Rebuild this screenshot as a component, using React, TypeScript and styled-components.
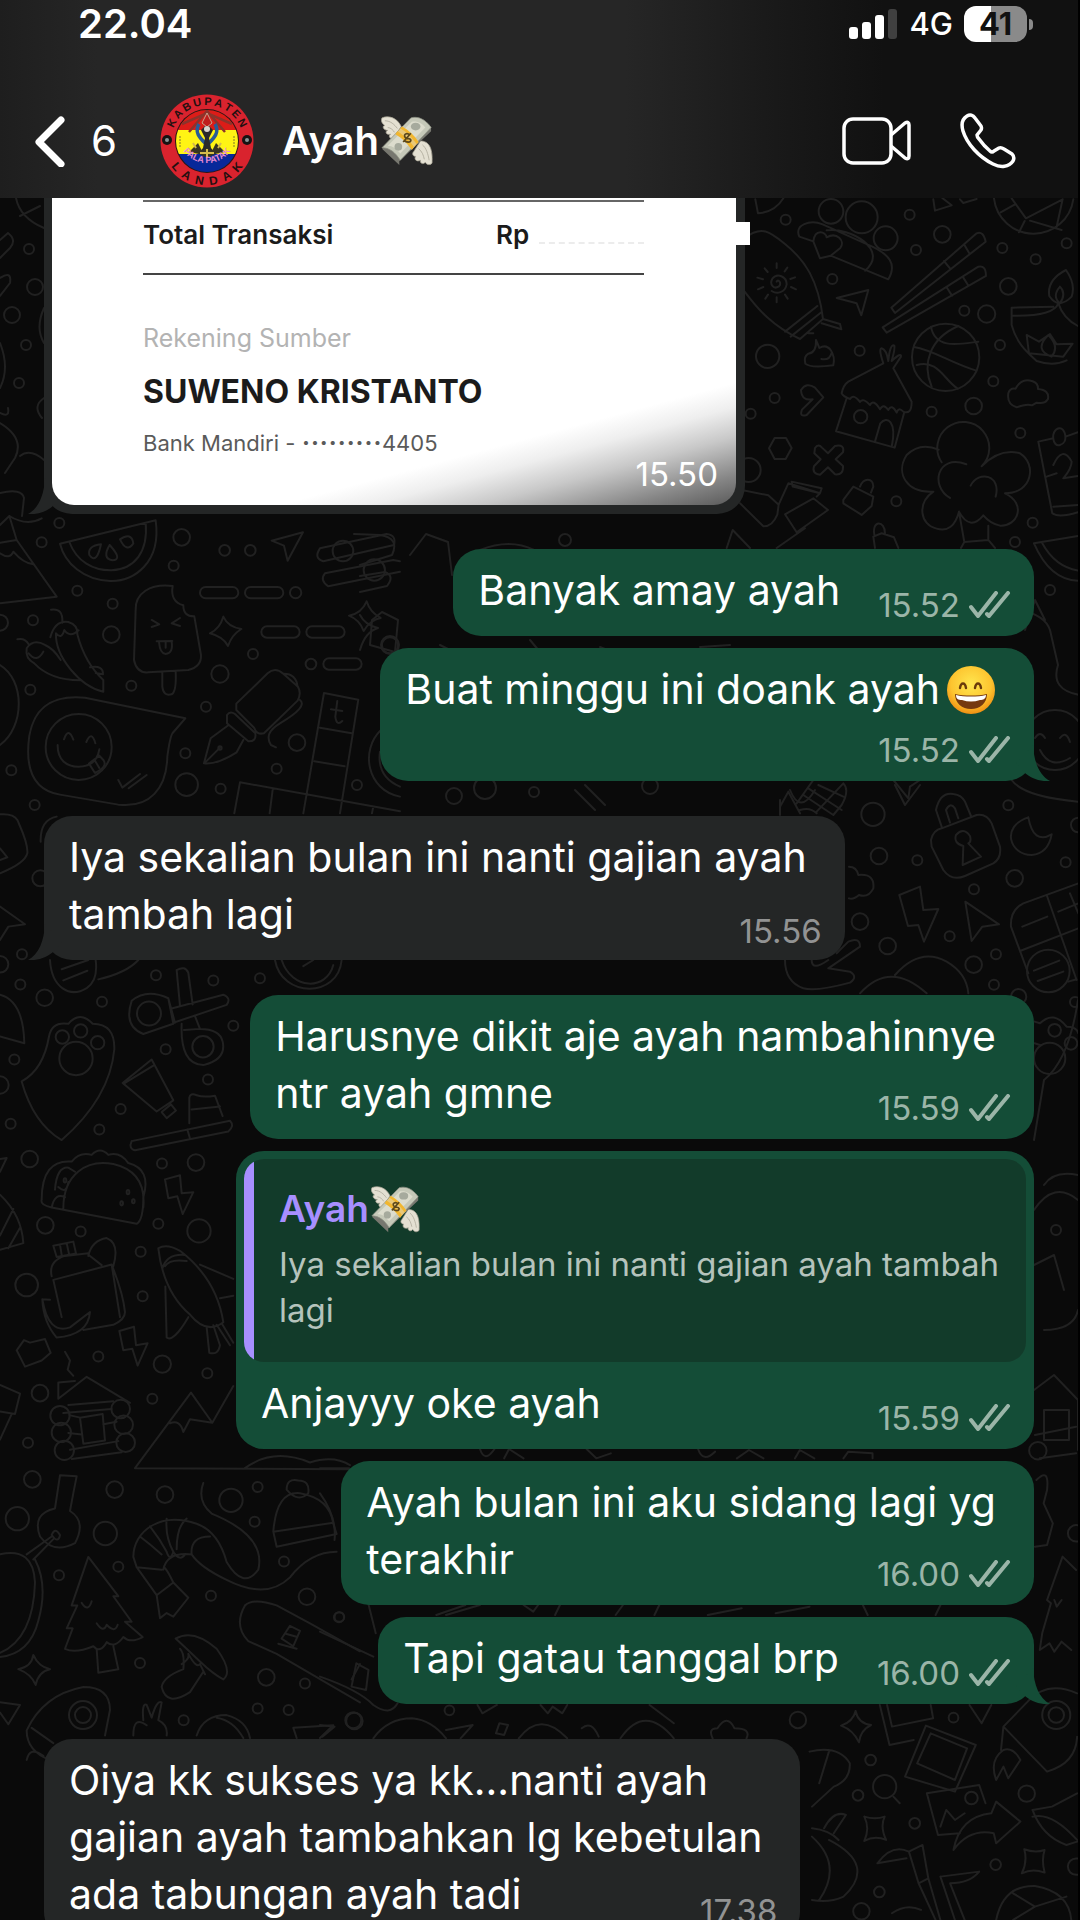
import React from "react";
import styled, { createGlobalStyle } from "styled-components";

const GlobalStyle = createGlobalStyle`
  *, *::before, *::after { box-sizing: border-box; }
  body {
    margin: 0;
    background: #000;
    font-family: Inter, "Liberation Sans", sans-serif;
  }
  p, h1 { margin: 0; }
`;

const Page = styled.div`
  height: 100vh;
  display: flex;
  flex-direction: column;
  overflow: hidden;
  border-right: 2px solid #000;
  background: #0a0a0a;
  color: #fff;
`;

const TopBar = styled.header`
  flex: none;
  height: 198px;
  display: flex;
  flex-direction: column;
  background: linear-gradient(90deg, #1e1e1e 0%, #262626 9%, #262626 58%, #191919 72%, #111 82%, #111 100%);
`;

const StatusBar = styled.div`
  height: 48px;
  display: flex;
  align-items: center;
  justify-content: space-between;
  padding: 0 51px 0 78px;
`;

const Clock = styled.time`
  font-size: 40px;
  line-height: 46px;
  font-weight: 600;
`;

const StatusIcons = styled.div`
  display: flex;
  align-items: center;
  gap: 11px;
`;

const Network = styled.span`
  font-size: 31px;
  line-height: 46px;
  font-weight: 500;
`;

const Battery = styled.span`
  position: relative;
  width: 63px;
  height: 36px;
  border-radius: 12px;
  background: linear-gradient(90deg, #fff 43%, #8a8a8a 43%);
  color: #111;
  font-size: 31px;
  line-height: 36px;
  font-weight: 700;
  text-align: center;
  &::after {
    content: "";
    position: absolute;
    left: 65px;
    top: 13px;
    width: 4px;
    height: 11px;
    border-radius: 0 4px 4px 0;
    background: #8a8a8a;
  }
`;

const NavBar = styled.nav`
  height: 150px;
  display: flex;
  align-items: center;
  padding: 35px 62px 0 34px;
`;

const IconButton = styled.button`
  display: flex;
  align-items: center;
  padding: 0;
  border: 0;
  background: none;
  color: #fff;
  font: inherit;
`;

const BackButton = styled(IconButton)`
  gap: 25px;
  width: 126px;
  font-size: 42px;
  line-height: 50px;
`;

const ContactName = styled.h1`
  flex: 1;
  display: flex;
  align-items: center;
  gap: 2px;
  margin-left: 28px;
  font-size: 40px;
  line-height: 50px;
  font-weight: 600;
`;

const Actions = styled.div`
  display: flex;
  align-items: center;
  gap: 48px;
`;

const Chat = styled.main`
  position: relative;
  flex: 1;
  min-height: 0;
  overflow: hidden;
  display: flex;
  flex-direction: column;
  padding: 0 44px;
`;

const WallpaperSvg = styled.svg`
  position: absolute;
  inset: 0;
  width: 100%;
  height: 100%;
  fill: none;
  stroke: #212121;
  stroke-linejoin: round;
  stroke-linecap: round;
  path, circle, ellipse, rect { vector-effect: non-scaling-stroke; stroke-width: 2px; }
`;

type Side = "in" | "out";

const Bubble = styled.article<{ $side: Side; $first?: boolean }>`
  position: relative;
  flex: none;
  width: fit-content;
  align-self: ${(p) => (p.$side === "out" ? "flex-end" : "flex-start")};
  margin-top: ${(p) => (p.$first ? "35px" : "12px")};
  border-radius: 28px;
  background: ${(p) => (p.$side === "out" ? "#144d37" : "#242626")};
`;

const Body = styled.div`
  padding: 13px 38px 17px 25px;
`;

const Line = styled.p`
  display: flex;
  align-items: center;
  gap: 6px;
  font-size: 41px;
  line-height: 57px;
  white-space: nowrap;
`;

const LastRow = styled.div<{ $metaOnly?: boolean }>`
  display: flex;
  align-items: flex-end;
  justify-content: space-between;
  gap: 38px;
  margin-right: -15px;
  min-height: ${(p) => (p.$metaOnly ? "46px" : "57px")};
`;

const Meta = styled.span<{ $side: Side }>`
  display: flex;
  align-items: center;
  gap: 9px;
  margin-left: auto;
  font-size: 33px;
  line-height: 24px;
  color: ${(p) => (p.$side === "out" ? "#9bb5a8" : "#929393")};
`;

const Tail = styled.svg<{ $side: Side }>`
  position: absolute;
  bottom: 0;
  ${(p) => (p.$side === "out" ? "right: -16px;" : "left: -16px; transform: scaleX(-1);")}
  fill: ${(p) => (p.$side === "out" ? "#144d37" : "#242626")};
`;

const QuoteFrame = styled.div`
  padding: 8px 8px 0;
`;

const Quote = styled.blockquote`
  margin: 0;
  padding: 27px 27px 29px 35px;
  border-radius: 20px;
  background: linear-gradient(90deg, #a78fff 10px, #123b2a 10px);
`;

const QuoteAuthor = styled.p`
  display: flex;
  align-items: center;
  gap: 2px;
  height: 46px;
  margin-bottom: 9px;
  color: #a78fff;
  font-size: 37px;
  line-height: 46px;
  font-weight: 600;
`;

const QuoteText = styled.p`
  color: #b5c3bc;
  font-size: 33px;
  line-height: 46px;
  white-space: nowrap;
`;

const PhotoBubble = styled(Bubble)`
  width: 701px;
  margin-top: 0;
  padding: 0 9px 9px 8px;
  border-radius: 0 0 28px 28px;
`;

const Receipt = styled.div`
  position: relative;
  height: 307px;
  padding: 2px 92px 0 91px;
  border-radius: 0 0 22px 22px;
  background:
    linear-gradient(345deg, #5a5a5a 0%, #868686 6%, #c8c8c8 14%, #eee 20%, rgba(255, 255, 255, 0) 25%),
    #fff;
  color: #1b1b1b;
`;

const ReceiptEdge = styled.span`
  position: absolute;
  left: 684px;
  top: 24px;
  width: 14px;
  height: 23px;
  background: #fff;
`;

const TotalRow = styled.div`
  height: 75px;
  display: flex;
  align-items: center;
  justify-content: space-between;
  padding-bottom: 5px;
  border-top: 2px solid #666;
  border-bottom: 2px solid #444;
  font-size: 26px;
  line-height: 30px;
  font-weight: 600;
`;

const Amount = styled.span`
  display: flex;
  align-items: flex-end;
  gap: 10px;
  width: 148px;
`;

const ErasedDigits = styled.span`
  flex: 1;
  height: 8px;
  border-top: 2px dashed #ececec;
`;

const SourceLabel = styled.p`
  margin-top: 46px;
  color: #b3b3b3;
  font-size: 25px;
  line-height: 34px;
`;

const SourceName = styled.p`
  margin-top: 17px;
  font-size: 32px;
  line-height: 40px;
  font-weight: 700;
`;

const SourceBank = styled.p`
  display: flex;
  align-items: center;
  margin-top: 16px;
  color: #5a5a5a;
  font-size: 22px;
  line-height: 30px;
  white-space: pre;
`;

const MaskDots = styled.span`
  font-size: 31px;
`;

const PhotoTime = styled.time`
  position: absolute;
  right: 18px;
  bottom: 14px;
  color: #fff;
  font-size: 33px;
  line-height: 34px;
`;

const BubbleTail = ({ side }: { side: Side }) => (
  <Tail $side={side} width="34" height="36" viewBox="0 0 34 36" aria-hidden="true">
    <path d="M17 0 C18 17 23 30 34 36 C24 37 14 33 8 27 L0 18 Z" />
  </Tail>
);

const Ticks = () => (
  <svg width="42" height="28" viewBox="0 0 42 28" fill="none" stroke="currentColor" strokeWidth="4" strokeLinecap="round" strokeLinejoin="round" role="img" aria-label="Terkirim">
    <path d="M2 16 L9 25 L27 2" />
    <path d="M18 23 L20 25 L39 2" />
  </svg>
);

const MoneyWings = ({ size }: { size: number }) => (
  <svg width={size} height={size} viewBox="0 0 54 54" role="img" aria-label="uang bersayap">
    <g fill="#e4e0d2" stroke="#a9a595" strokeWidth="0.8">
      <path d="M1 3 C8 0 17 3 21 12 L12 25 C8 24 8 21 10 20 C5 21 4 17 7 16 C2 16 1 11 4 11 C0 8 0 5 1 3 Z" />
      <path d="M41 27 C49 27 54 33 53 50 C50 53 47 51 46 49 C44 52 40 50 41 47 C37 49 34 46 36 43 C33 43 32 40 34 38 Z" />
      <path d="M4 6 C10 6 14 10 17 14 M7 13 C10 13 13 16 14 18 M43 31 C47 34 49 41 50 47 M39 35 C43 38 44 42 45 46" fill="none" />
    </g>
    <path d="M1 35 L19 52 L19 48 L52 17 L52 13 L50 10 Z" fill="#77776f" />
    <path d="M1 34 L31 3 C38 1 46 4 52 13 L20 47 C15 39 9 34 1 34 Z" fill="#c5c8b8" stroke="#8d9084" strokeWidth="0.8" />
    <path d="M7 32 L32 7 C38 6 43 9 46 13 L20 40 C16 35 12 32 7 32 Z" fill="#dcdccd" />
    <ellipse cx="36" cy="12" rx="5" ry="4" fill="#a6aa9d" />
    <ellipse cx="18" cy="33" rx="4" ry="4" fill="#a6aa9d" />
    <path d="M15 20 L22 12 C29 16 35 22 39 28 L32 36 C27 29 22 24 15 20 Z" fill="#e9c878" />
    <path d="M15 20 L17 17 C25 22 30 27 34 33 L32 36 C27 29 22 24 15 20 Z M20 14 L22 12 C29 16 35 22 39 28 L37 30 C31 22 26 17 20 14 Z" fill="#f1b62f" />
    <path d="M30 21 C27 18 23 20 25 23 C27 26 30 23 31 26 C31 29 26 29 24 26 M31 19 L23 28" fill="none" stroke="#5c481b" strokeWidth="1.8" />
  </svg>
);

const GrinningFace = () => (
  <svg width="50" height="50" viewBox="0 0 50 50" role="img" aria-label="wajah tertawa">
    <defs>
      <radialGradient id="face" cx="50%" cy="38%" r="64%">
        <stop offset="0%" stopColor="#ffe64f" />
        <stop offset="65%" stopColor="#fdc42f" />
        <stop offset="100%" stopColor="#ef8a10" />
      </radialGradient>
    </defs>
    <circle cx="25" cy="25" r="24" fill="url(#face)" />
    <path d="M14 23 C15 17 19 17 20 23 M29 23 C30 17 34 17 35 23" fill="none" stroke="#6a3b0b" strokeWidth="2.4" strokeLinecap="round" />
    <path d="M9 29 C18 31 32 31 41 29 C41 38 34 44 25 44 C16 44 9 38 9 29 Z" fill="#75390f" />
    <path d="M10 30 C18 32 32 32 40 30 C40 34 37 35 34 35 C28 37 22 37 16 35 C12 35 10 34 10 30 Z" fill="#fff" />
  </svg>
);

const Avatar = () => (
  <svg width="94" height="94" viewBox="0 0 94 94" role="img" aria-label="Foto profil Ayah">
    <defs>
      <clipPath id="disc"><circle cx="47" cy="47" r="31" /></clipPath>
      <path id="arcTop" d="M11 47 A36 36 0 0 1 83 47" />
      <path id="arcBottom" d="M3 47 A44 44 0 0 0 91 47" />
      <path id="arcInner" d="M18 40 A29 29 0 0 0 76 40" />
    </defs>
    <circle cx="47" cy="47" r="46.500" fill="#d9232e" />
    <circle cx="47" cy="47" r="32" fill="#2a1714" />
    <g clipPath="url(#disc)">
      <rect width="94" height="36" fill="#dd1c18" />
      <rect y="36" width="94" height="24" fill="#fff414" />
      <rect y="60" width="94" height="34" fill="#07289a" />
      <path d="M22 30 L47 19 L72 30 M29 38 L47 17 L65 38" fill="none" stroke="#8d332b" strokeWidth="2.500" />
    </g>
    <path d="M47 19 L52 29 L47 33 L42 29 Z" fill="#bf1d1d" stroke="#c6a58c" strokeWidth="1" />
    <path d="M39 30 C34 38 40 44 45 49 M55 30 C60 38 54 44 49 49" fill="none" stroke="#285b97" strokeWidth="3.500" />
    <path d="M41 36 L45 32 L49 32 L53 36 L49 44 L51 54 L56 60 H38 L43 54 L45 44 Z" fill="#292b2c" />
    <circle cx="47" cy="35" r="3" fill="#d9d5cf" />
    <path d="M29 58 L38 49 L42 57 L47 54 L52 57 L56 49 L65 58 L55 60 L47 64 L39 60 Z" fill="#383522" />
    <path d="M33 49 L36 54 M61 49 L58 54 M47 55 V64 M40 59 L54 59" stroke="#d4bb4c" strokeWidth="2" />
    <path d="M20 42 V53 M74 42 V53" stroke="#aaa025" strokeWidth="1.500" strokeDasharray="2 1" />
    <g fontFamily="Liberation Sans, sans-serif" fontWeight="700" textAnchor="middle">
      <text fontSize="11" fill="#241010"><textPath href="#arcTop" startOffset="50%">{"K\u2009A\u2009B\u2009U\u2009P\u2009A\u2009T\u2009E\u2009N"}</textPath></text>
      <text fontSize="12" fill="#241010"><textPath href="#arcBottom" startOffset="50%">{"L\u00a0\u00a0A\u00a0\u00a0N\u00a0\u00a0D\u00a0\u00a0A\u00a0\u00a0K"}</textPath></text>
      <text fontSize="9" fill="#e58bd0"><textPath href="#arcInner" startOffset="50%">PALA PATAK</textPath></text>
    </g>
    <circle cx="7" cy="46" r="5" fill="#171313" /><circle cx="7" cy="46" r="2" fill="#8b9598" />
    <circle cx="87" cy="46" r="5" fill="#171313" /><circle cx="87" cy="46" r="2" fill="#8b9598" />
  </svg>
);

type Dot = [number, number, number];
const Dots = ({ items, ratio = 1 }: { items: Dot[]; ratio?: number }) => (
  <>
    {items.map(([x, y, r]) => (
      <ellipse key={`${x}-${y}-${r}`} cx={x} cy={y} rx={r} ry={r * ratio} />
    ))}
  </>
);

const topRightDots: Dot[] = [[257, 89, 15], [393, 64, 37], [485, 82, 48], [557, 145, 36], [629, 74, 15], [727, 133, 25], [648, 180, 15], [907, 174, 15], [1100, 160, 15], [1007, 208, 15], [925, 289, 25], [397, 267, 15], [793, 362, 15], [860, 372, 26], [900, 465, 15], [479, 482, 15], [203, 499, 35], [880, 574, 15], [821, 648, 25], [695, 665, 15], [224, 624, 15], [152, 671, 15], [961, 729, 15], [589, 934, 15], [998, 998, 15], [945, 1056, 15], [146, 840, 36], [482, 680, 20]];
const leftDots: Dot[] = [[178, 69, 15], [125, 127, 15], [545, 112, 25], [674, 151, 16], [751, 151, 16], [521, 197, 15], [232, 272, 15], [338, 311, 15], [99, 361, 15], [334, 404, 25], [0, 368, 24], [887, 278, 17], [759, 462, 15], [660, 522, 26], [933, 492, 16], [91, 569, 15], [394, 557, 15], [618, 620, 15], [891, 728, 25], [556, 760, 15], [34, 811, 15], [560, 854, 34], [662, 866, 15], [830, 806, 15], [1071, 855, 15], [104, 915, 15], [1170, 436, 24], [236, 741, 99], [121, 1135, 24], [66, 1363, 15], [0, 1393, 25]];
const lowerLeftDots: Dot[] = [[61, 48, 15], [134, 74, 25], [306, 82, 15], [468, 30, 15], [640, 40, 15], [780, 36, 15], [700, 129, 15], [43, 195, 15], [497, 175, 15], [624, 234, 15], [362, 292, 15], [298, 332, 15], [32, 321, 15], [0, 245, 26], [89, 390, 25], [486, 399, 15], [588, 397, 25], [136, 520, 25], [242, 532, 15], [475, 517, 15], [597, 531, 35], [422, 572, 15], [80, 637, 34], [428, 659, 15], [295, 777, 15], [487, 792, 26], [622, 810, 15], [120, 849, 25], [457, 860, 15], [84, 946, 15], [97, 1018, 25], [344, 1038, 25], [495, 1048, 25], [693, 1059, 35], [773, 1033, 15], [52, 1095, 35], [316, 1124, 35], [764, 1101, 15], [355, 1189, 15], [177, 1206, 15], [852, 1179, 15], [633, 1246, 15], [921, 1248, 25], [1017, 1288, 15], [420, 1378, 15], [799, 1406, 25], [915, 1418, 15], [866, 1470, 15], [773, 1467, 15], [551, 1490, 15], [1060, 1490, 24], [187, 151, 20], [242, 139, 20], [293, 162, 20], [228, 193, 50], [447, 105, 36], [609, 170, 32], [249, 1480, 24], [249, 1480, 42]];
const lockDots: Dot[] = [[279, 103, 35], [297, 228, 25], [412, 241, 15], [685, 76, 15], [857, 247, 15], [704, 295, 25], [582, 328, 15], [240, 425, 25], [323, 498, 25], [509, 469, 15], [648, 523, 15], [581, 554, 25], [642, 614, 15], [805, 573, 64], [885, 666, 15], [895, 135, 22], [824, 751, 19], [873, 790, 19], [809, 835, 47], [716, 650, 23]];
const lowerRightDots: Dot[] = [[71, 843, 17], [267, 811, 10], [986, 840, 17], [1307, 833, 10], [1136, 960, 11], [1110, 1066, 11], [1458, 1061, 17], [1227, 1150, 11], [1394, 1274, 11], [1154, 1356, 11], [1117, 1414, 17], [1560, 1280, 17], [1519, 825, 16], [1519, 825, 29], [1165, 1040, 24], [1344, 1074, 13], [1481, 32, 18], [1560, 280, 17], [40, 531, 10]];

const Wallpaper = () => (
  <WallpaperSvg viewBox="0 198 1078 1722" preserveAspectRatio="xMidYMin slice" aria-hidden="true">
    <g transform="translate(700 190) scale(.3333)">
      <Dots items={topRightDots} />
      <path d="M166 28 L174 70 C207 68 233 53 250 25 M700 28 L705 62 L755 46 L727 24 M780 28 L790 39 L830 27" />
      <path d="M298 140 C282 104 330 88 368 103 L495 160 C575 192 590 225 565 268 L392 197 L360 205 L340 154 L298 140 Z M392 197 L360 205 L340 154 C345 115 378 125 380 142 C410 125 437 152 421 174 Z M380 121 C450 110 570 180 495 242" />
      <path d="M134 145 C184 105 210 125 255 162 C315 210 355 270 369 387 L300 447 C220 410 175 360 134 305 M255 425 L352 348 M272 440 L364 367 M369 387 L420 402 L424 418 L365 400 M325 430 L340 430" />
      <path d="M230 275 C234 265 246 279 237 289 C220 300 208 283 217 266 C232 247 260 260 260 283 C255 309 230 313 215 303 M230 220 V234 M262 233 L254 244 M285 262 L271 267 M288 298 L273 291 M263 326 L255 314 M230 337 V322 M196 326 L204 314 M174 298 L190 291 M172 263 L189 268 M194 235 L203 246" />
      <path d="M410 324 L505 300 L484 376 L470 340 Z M574 353 L830 130 Q850 122 857 155 L585 369 Z M732 213 L750 235 M792 163 L808 190 M548 412 L835 230 Q858 225 858 258 L560 428 Z M740 292 L756 317 M790 263 L804 285" />
      <circle cx="737" cy="502" r="101" />
      <path d="M642 471 C700 480 750 518 829 542 M693 410 C705 480 780 462 835 455 M775 408 C690 445 665 520 695 590 M650 525 C714 507 732 570 773 596" />
      <path d="M425 610 Q430 585 445 575 L550 520 Q535 475 545 475 Q560 480 565 513 Q570 460 583 467 Q586 475 575 513 Q605 485 603 500 L580 535 L635 635 Q635 675 610 665 Q595 650 590 668 Q575 640 565 660 Q550 638 540 658 Q520 625 510 645 Q490 622 480 636 Q460 610 450 627 Q430 620 425 610 M440 625 L408 724 L584 773 L612 670 M525 755 L541 700 C562 675 590 695 576 766" />
      <path d="M348 450 L358 474 C388 456 407 495 400 526 Q330 535 316 521 Q310 500 325 491 Q350 488 348 450 M364 507 Q389 512 395 488 M303 600 Q320 575 345 593 L370 622 L320 675 Q297 682 306 659 L338 628 Q305 634 303 600" />
      <path d="M224 744 L258 744 L275 774 L257 807 L224 807 L207 775 Z M345 774 Q355 760 366 773 L384 790 L405 768 Q435 762 429 787 L407 808 L429 828 Q431 856 405 853 L384 832 L360 854 Q335 851 342 829 L362 808 L343 790 Z" />
      <path d="M725 817 A78 78 0 1 1 845 829 Q900 774 960 790 C1010 820 1000 910 915 910 C980 940 955 1010 900 1007 Q870 1000 850 976 Q810 1025 777 965 Q760 1030 710 1016 C660 1005 650 940 700 905 C620 910 585 850 620 795 Q660 755 716 779 M750 924 C690 890 710 790 799 823 M812 887 C836 840 905 855 887 920 M777 965 L793 1056 L783 1074 M865 1007 V1050 L885 1074 M793 1056 L865 1050" />
      <path d="M882 25 A120 120 0 0 0 1120 28 M935 25 L978 85 L1088 28 M902 67 L945 43 M974 93 L957 127 M990 92 L1085 120 M1088 28 L1070 110" />
      <path d="M925 610 Q930 593 947 596 Q965 562 998 574 Q1015 580 1014 597 Q1049 600 1044 627 Q1035 643 1010 638 L996 646 Q980 640 950 652 Q920 643 925 610 M1098 240 Q1040 270 1048 318 Q1075 360 1115 320 Q1128 282 1098 240 M1080 290 Q1055 320 1080 340 Q1100 310 1080 290 M1060 350 L935 353 V405 C950 460 980 485 1010 513 Q1060 530 1100 511 M935 377 Q1060 380 1075 340 Q1090 385 1134 408 M987 490 L980 435 L1017 455 L1050 432 L1070 463 L1118 461 L1090 500 L987 490 M1045 435 Q1000 480 1055 500 Q1080 470 1045 435" />
      <path d="M1015 755 L1060 745 M1097 740 L1134 727 M1015 755 L1057 970 Q1075 985 1134 967 M1040 860 L1070 850 M1060 950 L1134 945 M1060 825 Q1088 765 1115 815 Q1115 835 1090 865 L1134 858 M1077 715 C1050 720 1057 773 1080 765 C1108 758 1095 710 1077 715 M1002 1060 L1134 1038 M1002 1060 Q1050 1170 1134 1172 M1027 1060 Q1065 1130 1134 1142" />
      <path d="M125 900 L205 916 L236 944 L232 974 Q217 1010 190 1009 L120 940 M236 944 L265 880 L360 910 L350 920 M275 875 L365 895 L360 910 L278 890 Z M255 973 L340 925 L384 960 L290 1027 Z M230 1074 L315 1015 M80 1074 L98 1020 L150 1074 M430 930 L460 890 L520 920 L515 948 L485 975 L430 940 Z M480 890 C490 862 520 862 520 890 L513 908 M525 1074 L520 1040 L545 1030 L582 1042 L595 1074 M523 1034 C515 990 555 990 555 1030" />
    </g>
    <g transform="translate(0 500) scale(.3333)">
      <Dots items={leftDots} />
      <path d="M180 131 L467 61 C485 190 400 245 330 243 C250 240 195 190 180 131 M208 126 C230 185 280 212 335 211 C405 207 445 155 437 68 M303 133 Q262 138 268 165 Q290 195 303 133 M329 135 Q305 175 337 181 Q370 180 329 135 M360 118 Q395 95 400 130 Q380 160 360 118" />
      <path d="M0 75 L28 48 L50 120 L170 290 L0 310 M50 120 L0 128 M28 48 Q80 80 125 55 M0 160 Q30 180 40 155 Q70 190 100 193" />
      <path d="M815 122 L909 97 L863 182 L852 137 Z M960 145 L1160 102 Q1190 105 1182 135 L970 184 Q940 175 960 145 M975 220 L1180 180 L1200 184 M1200 215 L985 259 Q958 240 975 220" />
      <circle cx="1029" cy="153" r="31" /><circle cx="1123" cy="210" r="32" />
      <rect x="600" y="261" width="115" height="34" rx="17" /><rect x="735" y="261" width="115" height="34" rx="17" /><rect x="784" y="379" width="115" height="34" rx="17" /><rect x="919" y="379" width="115" height="34" rx="17" /><rect x="970" y="475" width="115" height="34" rx="17" />
      <path d="M670 350 Q684 381 724 387 Q695 405 684 438 Q671 411 630 400 Q660 385 670 350 M1100 304 Q1110 337 1142 354 Q1110 360 1091 393 Q1080 360 1047 347 Q1085 340 1100 304" />
      <path d="M518 258 C450 250 405 280 407 330 L402 480 Q410 520 445 517 L565 510 Q605 500 603 465 L583 349 Q550 350 550 316 Q510 305 518 258 M487 517 V560 Q490 590 515 583 Q530 575 527 513 M455 360 L478 373 L455 381 M540 354 L515 370 L540 378 M470 424 L517 423 M477 426 Q480 461 497 462 Q520 460 515 425 M497 425 V443" />
      <path d="M153 329 Q190 323 187 368 M151 412 Q165 360 205 366 Q235 375 232 403 Q255 490 310 540 V575 C240 560 165 470 168 400 Q185 420 193 390 Q210 415 236 391 M52 418 Q75 413 86 433 M103 490 Q75 475 80 445 Q100 415 135 435 Q160 445 182 480 M103 490 Q150 540 240 541 M86 460 Q110 490 130 455 M270 502 Q310 495 309 523 L287 519" />
      <path d="M556 655 L255 593 C170 585 105 610 88 707 C75 800 95 870 180 884 L355 914 C450 925 500 865 502 770 Q510 710 518 699 L556 655 M173 735 C172 780 200 800 235 800 Q290 800 298 748 M192 718 Q205 680 220 719 M259 726 Q275 690 286 730 M267 791 L285 819 Q325 800 310 780 L298 767 Z M285 782 L298 804 M355 840 L367 863 L420 822 M386 865 L440 825" />
      <path d="M709 611 L803 520 Q825 500 850 521 L894 560 Q905 580 893 602 L792 700 Q770 705 763 684 L709 630 Z M681 645 Q690 632 705 642 L766 700 Q770 725 745 724 L681 670 Z M686 675 L632 715 L612 790 Q650 795 710 757 L730 720 M615 788 L660 743 M850 521 Q888 520 893 560 M900 600 Q925 620 840 670 Q790 700 813 735 L828 742" />
      <circle cx="660" cy="744" r="5" />
      <path d="M972 579 L1075 599 L1020 940 M972 579 L910 940 M960 683 L1055 700 M943 784 L1034 799 M703 940 L720 847 L1200 934 M809 940 L818 870 M1120 920 L1116 940 M1012 603 L1006 650 Q1010 680 1027 663 M993 628 L1027 633 M0 495 C75 540 75 680 0 735 M1143 690 C1080 750 1100 870 1200 890 M1200 860 Q1130 830 1140 755" />
      <path d="M0 943 Q40 940 52 960 C65 990 85 1030 82 1060 Q75 1090 0 1120 M0 1045 L22 1072 L0 1080 M0 1220 L75 1273 L25 1280 L0 1320 M122 1025 Q120 960 170 950" />
    </g>
    <g transform="translate(0 960) scale(.3333 .5102)">
      <Dots items={lowerLeftDots} ratio={0.6533} />
      <path d="M150 0 C155 55 210 75 260 55 Q295 40 287 0 M185 18 L265 0 M190 40 L262 21 M295 38 Q380 25 415 0 M825 0 C845 75 1015 75 1025 0 M845 0 C875 60 980 60 1000 10 M910 12 L940 0" />
      <path d="M65 238 Q130 215 147 150 Q155 120 205 125 Q240 98 278 125 Q345 125 343 175 Q330 270 185 353 Q100 320 65 238 M0 68 Q70 80 73 163 L0 150" />
      <path d="M395 80 Q440 55 505 75 L520 125 L430 145 Q370 130 395 80 M505 75 L525 123 M515 95 L670 68 Q695 75 680 88 L520 123 M530 20 Q555 10 565 25 L578 87 M530 20 L540 90 M545 125 Q540 205 610 206 Q680 195 668 160 Q660 135 600 135 L585 110 M552 137 L600 135" />
      <path d="M368 241 L455 195 L520 275 L470 297 Z M375 241 L460 207 M485 298 L513 283 L528 295 L500 310 Z M395 355 L690 315 Q705 325 685 336 L405 373 Q385 370 395 355 M562 332 L570 350 M568 320 V270 Q570 260 590 265 Q610 270 645 266 L668 306 M575 293 L660 287" />
      <path d="M125 470 Q125 390 215 395 Q240 375 275 382 Q300 365 325 382 Q360 375 385 398 Q455 410 430 465 Q430 510 410 517 L155 485 Q120 480 125 470 M190 487 C190 420 260 390 340 400 Q440 415 430 485 M155 485 Q165 455 195 465 M165 450 Q170 405 205 407 L225 415 M175 445 Q200 460 205 435 M0 460 Q65 500 70 555 L0 568 M0 540 L40 488 M25 565 L60 525 M0 390 L20 388 L0 415" />
      <circle cx="384" cy="455" r="4" /><circle cx="400" cy="473" r="4" /><circle cx="365" cy="477" r="4" /><circle cx="195" cy="432" r="4" />
      <path d="M495 430 L540 422 L545 457 L580 455 L548 498 L532 463 L505 467 Z M358 727 L402 719 L408 755 L443 751 L413 795 L397 762 L370 765 Z M50 765 L72 745 L90 750 L135 743 L152 770 L125 785 L75 797 Z" />
      <path d="M155 620 Q145 590 195 580 L265 575 M160 627 L335 597 Q370 655 375 690 Q375 705 340 715 L250 725 M160 627 L185 700 M335 597 L360 700 M160 560 L220 552 L228 575 L170 582 Z M180 558 L185 578 M200 555 L207 576 M265 580 Q275 550 320 545 Q360 555 340 600 M270 580 L305 598 M127 665 Q145 735 210 720 L270 690 Q265 735 170 740 Q130 710 127 665 L150 666" />
      <path d="M475 565 Q500 555 540 570 Q650 625 670 710 Q620 735 570 695 Q490 650 475 565 M487 605 Q500 575 555 578 M495 600 Q510 585 560 590 M496 640 L500 740 Q520 750 565 700 M600 597 L700 625 M660 663 L700 658 M620 720 L628 770 Q655 775 660 755 L640 716 M665 712 L700 750 M650 715 L690 755" />
      <path d="M175 860 L260 817 L390 868 M175 860 V828 L225 825 M195 768 L210 785 L203 803 L220 815 M240 897 L308 890 L315 942 L250 948 Z M205 872 L340 865 M208 892 L240 897 M310 910 L350 905 M205 927 L245 930 M210 960 L355 943 M215 978 L365 965 M190 888 L335 880" />
      <Dots items={[[180, 893, 29], [184, 926, 29], [193, 961, 29], [362, 880, 28], [371, 911, 28], [377, 946, 28]]} ratio={0.6533} />
      <path d="M405 996 L573 848 L637 907 L700 835 M405 996 L1050 998 M510 908 Q540 900 550 925 L570 900 L637 907 M735 996 Q820 955 930 985 Q1000 970 1050 990 M0 833 L60 850 L45 890 L0 885 M0 940 L35 890" />
      <path d="M180 1010 L230 1012 L220 1045 L210 1080 Q260 1100 225 1143 Q160 1165 120 1130 Q95 1085 165 1075 Z M155 1127 Q165 1110 180 1127 Q175 1145 155 1127 M100 1175 L160 1135 M80 1165 L155 1130 M0 1165 Q100 1150 105 1220 Q100 1330 0 1358 M105 1175 Q145 1225 115 1295 Q90 1360 0 1366" />
      <path d="M265 1170 L355 1247 H340 L395 1297 H375 L428 1327 Q390 1340 370 1327 Q345 1350 320 1337 Q300 1360 280 1345 Q225 1360 195 1350 L218 1310 H200 L232 1265 H215 Z M290 1350 L295 1397 L355 1390 L340 1345 M245 1260 Q265 1280 275 1257 M290 1300 Q310 1320 320 1303 Q345 1320 353 1303" />
      <path d="M400 1170 C400 1120 480 1080 590 1105 Q655 1120 680 1180 Q730 1235 775 1195 C795 1140 710 1105 635 1085 Q590 1060 610 1025 M400 1170 L410 1190 L470 1245 L520 1220 Q490 1180 490 1195 Q500 1160 575 1165 M575 1165 Q570 1130 630 1130 M575 1165 Q600 1190 680 1215 Q800 1255 870 1210 Q930 1160 1010 1160 M470 1245 L480 1290 L500 1280 L520 1287 L565 1250 L520 1220 M420 1130 Q450 1145 485 1165 M450 1110 Q480 1135 500 1160 M500 1095 Q495 1130 520 1160 M560 1095 Q530 1110 530 1155 M410 1190 L485 1195 M500 1160 Q510 1180 520 1160 Q540 1180 555 1165" />
      <path d="M820 1120 Q830 1040 900 1045 Q990 1055 1000 1105 L1010 1125 L830 1150 Z M825 1120 L1000 1103 M860 1038 Q860 1015 895 1020 Q930 1020 925 1045 Q895 1065 860 1038" />
      <path d="M735 1265 Q760 1250 830 1265 L930 1300 L1080 1355 M735 1265 Q700 1305 745 1335 L830 1360 L1080 1455 M835 1340 L890 1350 M845 1330 L870 1305 L900 1315 L880 1345 Z M855 1320 L892 1327 M1055 1410 L1080 1380 M485 1425 Q490 1405 550 1390 Q555 1360 540 1350 M485 1425 Q500 1465 570 1435 L610 1395 M527 1330 Q580 1310 650 1350 Q700 1395 670 1410 Q640 1400 600 1375 Q560 1350 527 1330 M545 1380 Q570 1370 565 1360 Q590 1390 600 1380 L615 1400" />
      <path d="M55 1390 Q95 1385 100 1362 Q115 1385 150 1390 Q115 1395 107 1421 Q95 1400 55 1390 M0 1455 L60 1460 L25 1498 L0 1475 M80 1510 Q130 1440 250 1425 Q330 1425 330 1470 L315 1520 M80 1510 Q80 1550 150 1568 M95 1505 L160 1535 M80 1568 Q90 1540 130 1560 M400 1520 Q400 1480 440 1500 M430 1490 Q425 1455 440 1460 L455 1485 Q470 1450 485 1455 L475 1490 Q505 1500 500 1520 M590 1520 Q610 1480 680 1480 Q740 1490 750 1525 M650 1485 Q700 1490 730 1525 M880 1505 L1000 1500 L960 1525 M880 1505 L890 1525" />
    </g>
    <g transform="translate(780 780) scale(.3333)">
      <Dots items={lockDots} />
      <path d="M453 180 Q460 150 485 145 L590 105 Q620 100 635 130 L660 200 Q665 235 640 250 L555 288 Q515 305 490 270 L455 200 Z M485 140 L468 90 Q480 35 520 42 Q545 45 555 65 L573 108 M510 128 L498 90 Q510 65 525 85 L535 115 M548 255 L550 198 Q520 190 528 165 Q550 140 570 168 Q575 185 565 190 L603 230 Z M745 112 C660 140 690 225 755 225 Q805 220 815 163 Q760 195 745 112" />
      <path d="M358 345 L420 320 L430 390 L475 387 L432 485 L415 435 L384 438 Z M556 365 L657 433 L607 440 L575 483 Z M695 0 Q730 50 895 65 M340 0 L385 55 L390 20 L420 0 M895 310 L730 370 Q690 390 693 440 L745 580 M800 345 L890 600 M720 513 L895 445 M727 440 L802 410 M835 395 L895 370 M870 340 L895 400 M762 572 L838 542 M773 603 L850 575 M865 605 L890 598" />
      <path d="M207 260 Q230 260 235 285 Q285 280 280 325 Q265 355 237 345 Q220 360 207 355 M15 540 Q15 605 70 625 Q110 635 210 608 Q235 590 210 575 L145 565 M145 565 L240 500 Q240 470 205 485 L170 520 M95 540 Q95 575 145 540 M240 640 Q330 540 440 640 M345 585 Q420 500 500 545 Q560 580 565 640 M0 80 L25 35 L60 100 M0 60 L0 105 M50 70 L100 0 M60 90 Q90 80 110 100 M85 25 L185 90 M70 45 L160 105 M110 95 L190 10 Q210 30 185 75 L160 105 M115 15 L190 50 M764 725 L780 730 Q820 690 860 740 Q890 740 895 760 M764 790 L780 795" />
    </g>
    <g transform="translate(320 1440) scale(.4847 .3333)">
      <Dots items={lowerRightDots} ratio={1.454} />
      <path d="M1475 -15 L1560 -40 M1485 55 L1560 40 M1478 120 Q1505 80 1500 150 L1493 190 L1512 250 L1500 315 L1475 320 M1560 390 L1532 350 L1500 480 L1508 490 L1490 580 L1485 630 L1505 610 L1515 635 L1530 605 L1550 630 M1515 480 L1520 500 L1530 480" />
      <path d="M1170 795 L1180 860 L1265 835 L1260 795 M1155 795 L1175 915 L1225 900 M1105 813 Q1110 850 1137 855 Q1115 870 1112 907 Q1100 870 1075 857 Q1100 845 1105 813 M1340 795 L1365 850 L1385 795 M1250 857 L1353 915 L1310 1055 L1207 1010 Z M1260 880 L1335 925 L1310 1020 L1232 970 Z" />
      <path d="M1562 760 Q1500 720 1460 785 L1410 860 L1500 995 Q1560 970 1562 890 M1410 860 L1405 930 M1410 930 Q1380 960 1395 1020 L1410 980 L1420 1015 L1445 960 Q1430 920 1410 930 M1183 1070 L1196 1090 M1252 1060 L1360 1035 L1373 1090 M1252 1060 L1275 1185 L1320 1180 M1280 1160 L1292 1110 L1310 1140 L1330 1120 M1307 1230 Q1320 1130 1385 1120 L1395 1085 L1445 1145 L1395 1210 L1390 1180 Q1340 1165 1307 1230 M1123 1130 Q1145 1140 1165 1130 Q1155 1160 1168 1200 Q1145 1185 1123 1203 Q1135 1165 1123 1130 M1453 1228 Q1475 1240 1495 1230 Q1488 1260 1495 1298 Q1470 1285 1448 1300 Q1460 1265 1453 1228" />
      <path d="M1010 935 Q1070 915 1093 970 Q1095 1020 1060 1040 L1015 1100 M1050 935 L1030 1030 M1015 1165 Q1050 1170 1070 1200 M1040 1165 Q1060 1110 1085 1125 L1060 1180 M1050 1200 Q1150 1275 1080 1370 Q1050 1390 1015 1380 M1015 1190 Q1080 1275 1030 1380 M1150 1270 Q1180 1210 1215 1235 L1235 1330 L1270 1440 M1215 1235 L1243 1215 L1255 1315 L1235 1330 M1150 1270 L1210 1255 M1255 1315 L1280 1440 M1280 1310 L1360 1295 Q1340 1330 1300 1330 L1330 1440 M1280 1310 L1310 1440 M1180 1420 Q1210 1390 1240 1410 M1395 1440 Q1410 1335 1475 1338 Q1545 1355 1550 1440 M1430 1360 L1475 1400 L1540 1370 M1475 1400 L1430 1440 M1470 1110 L1510 1100 L1562 1060 M1470 1110 Q1490 1190 1540 1215 L1562 1205 M1470 1130 Q1510 1115 1562 1200" />
      <path d="M0 85 H60 M0 160 Q35 230 30 300 M100 493 L115 580 M0 575 L110 650 M0 710 Q80 750 110 795 Q145 830 160 790 M65 740 L75 670 L100 690 L95 750 Z M0 855 L30 860 L5 890 M110 895 Q140 835 190 835 Q230 840 260 895 M260 870 L315 855 L290 895 M370 850 L388 855 L380 885 L363 880 Z M410 895 Q455 810 510 895 M540 865 Q560 840 575 890 M620 895 Q670 790 730 895 M810 895 Q800 865 820 865 Q840 820 855 865 Q890 865 880 895 M325 795 L335 820 L365 795 M455 795 L470 820 L480 800 L500 820 L510 795 M680 795 L730 850" />
      <path d="M240 525 L300 495 M260 525 L330 495 M420 495 L440 515 L450 495 M485 525 L495 495 M610 525 L625 495 M690 525 L700 495 M800 525 L870 505 M940 520 L1010 500 M1120 495 L1130 525 M1270 525 L1280 495 M330 27 Q340 70 360 27 M380 55 L390 27 L420 55 M550 27 L570 55 L600 40 M780 27 Q790 70 815 35 M860 55 L885 30 L915 55 M980 55 L990 30 L1020 55 M1080 55 L1090 35 L1140 40 V55" />
    </g>
    <g transform="translate(360 500)">
      <path d="M50 55 L66 34 L88 42 L92 75 M120 50 Q150 38 174 50 M12 120 L22 112 L38 120 L35 152 L10 145 Z M0 115 Q5 125 18 128 Q5 132 0 150 M80 145 L100 155 M170 140 L180 152 M240 147 L260 155 M340 147 L370 145 M-6 34 L20 35 Q40 38 32 55 L0 65 M0 76 L25 72 Q35 76 27 86 L0 92" />
      <circle cx="205" cy="40" r="6" /><circle cx="30" cy="145" r="9" /><circle cx="690" cy="90" r="5" /><circle cx="695" cy="240" r="30" /><circle cx="125" cy="288" r="11" /><circle cx="290" cy="286" r="8" /><circle cx="174" cy="292" r="5" /><circle cx="94" cy="296" r="8" />
      <path d="M660 110 Q685 115 690 130 L698 165 Q690 190 720 195 M665 130 L675 100 L685 120 M675 238 Q680 230 685 238 M700 238 Q706 230 710 242 M680 250 Q690 270 710 258 M215 290 L235 310 M225 285 L245 305 M430 290 Q440 315 455 290 M535 285 L545 305 L560 285" />
    </g>
    <g transform="translate(1034 1000)">
      <path d="M0 140 L10 80 Q35 60 44 0 M10 185 Q20 170 44 175 M0 210 Q20 180 44 200 M0 265 L20 255 L30 290 M10 330 Q40 330 44 310 M0 390 L20 375 L44 400 V450 M10 410 H35 V440 H10 Z" />
      <circle cx="22" cy="230" r="5" />
    </g>
    <g transform="translate(0 198)">
      <path d="M16 0 Q20 20 44 30 M20 18 L40 8 M0 42 L8 35 Q17 42 10 50 L0 60 M0 80 Q12 72 10 85 L0 98 M44 110 Q35 130 44 145 M0 145 Q10 170 0 190 M0 225 Q25 240 15 260 L5 275 M0 215 Q10 220 8 210 M20 258 Q30 250 44 262 M0 295 Q22 290 24 300 L22 318 M44 200 Q32 208 42 220" />
      <circle cx="29" cy="51" r="5" /><circle cx="35" cy="89" r="8" /><circle cx="12" cy="117" r="8" /><circle cx="26" cy="147" r="5" /><circle cx="19" cy="185" r="5" />
    </g>
  </WallpaperSvg>
);

interface MessageProps {
  side: Side;
  lines: React.ReactNode[];
  time: string;
  first?: boolean;
  tail?: boolean;
  metaBelow?: boolean;
  quote?: React.ReactNode;
}

const Message = ({ side, lines, time, first, tail, metaBelow, quote }: MessageProps) => {
  const leading = metaBelow ? lines : lines.slice(0, -1);
  return (
    <Bubble $side={side} $first={first}>
      {tail && <BubbleTail side={side} />}
      {quote}
      <Body>
        {leading.map((line, i) => <Line key={i}>{line}</Line>)}
        <LastRow $metaOnly={metaBelow}>
          {!metaBelow && <Line>{lines[lines.length - 1]}</Line>}
          <Meta $side={side}>
            <time>{time}</time>
            {side === "out" && <Ticks />}
          </Meta>
        </LastRow>
      </Body>
    </Bubble>
  );
};

export default function App() {
  return (
    <Page>
      <GlobalStyle />
      <TopBar>
        <StatusBar>
          <Clock>22.04</Clock>
          <StatusIcons>
            <svg width="49" height="32" viewBox="0 0 49 32" fill="#fff" role="img" aria-label="Sinyal">
              <rect x="0" y="19" width="9" height="12" rx="3" />
              <rect x="13" y="14" width="9" height="17" rx="3" />
              <rect x="26" y="7" width="9" height="24" rx="3" />
              <rect x="39" y="1" width="9" height="30" rx="3" fill="#404040" />
            </svg>
            <Network>4G</Network>
            <Battery>41</Battery>
          </StatusIcons>
        </StatusBar>
        <NavBar>
          <BackButton aria-label="Kembali, 6 obrolan belum dibaca">
            <svg width="32" height="52" viewBox="0 0 32 52" fill="none" stroke="#fff" strokeWidth="7" strokeLinecap="round" strokeLinejoin="round">
              <path d="M27 5 L5 27 L27 49" />
            </svg>
            6
          </BackButton>
          <Avatar />
          <ContactName>Ayah<MoneyWings size={52} /></ContactName>
          <Actions>
            <IconButton aria-label="Panggilan video">
              <svg width="70" height="48" viewBox="0 0 70 48" fill="none" stroke="#fff" strokeWidth="3.500" strokeLinejoin="round">
                <rect x="2" y="2" width="47" height="44" rx="9" />
                <path d="M49 18 L63 6 Q67 4 67 8 V39 Q67 43 63 41 L49 29" />
              </svg>
            </IconButton>
            <IconButton aria-label="Panggilan suara">
              <svg width="56" height="56" viewBox="0 0 56 56" fill="none" stroke="#fff" strokeWidth="3.500" strokeLinejoin="round">
                <path d="M7 3 C10 1 13 2 15 5 L21 13 Q22 15 21 17 L17 22 Q17 24 19 26 Q24 33 30 38 Q32 40 34 38 L39 35 Q41 34 44 36 L52 41 Q55 44 53 48 C49 54 41 55 33 51 C19 44 7 31 3 18 C1 11 2 6 7 3 Z" />
              </svg>
            </IconButton>
          </Actions>
        </NavBar>
      </TopBar>
      <Chat>
        <Wallpaper />
        <PhotoBubble $side="in">
          <BubbleTail side="in" />
          <Receipt>
            <ReceiptEdge />
            <TotalRow>
              <span>Total Transaksi</span>
              <Amount>Rp<ErasedDigits /></Amount>
            </TotalRow>
            <SourceLabel>Rekening Sumber</SourceLabel>
            <SourceName>SUWENO KRISTANTO</SourceName>
            <SourceBank>Bank Mandiri - <MaskDots>·········</MaskDots>4405</SourceBank>
            <PhotoTime>15.50</PhotoTime>
          </Receipt>
        </PhotoBubble>
        <Message side="out" first lines={["Banyak amay ayah"]} time="15.52" />
        <Message side="out" tail metaBelow lines={[<React.Fragment key="t">Buat minggu ini doank ayah<GrinningFace /></React.Fragment>]} time="15.52" />
        <Message side="in" first tail lines={["Iya sekalian bulan ini nanti gajian ayah", "tambah lagi"]} time="15.56" />
        <Message side="out" first lines={["Harusnye dikit aje ayah nambahinnye", "ntr ayah gmne"]} time="15.59" />
        <Message
          side="out"
          lines={["Anjayyy oke ayah"]}
          time="15.59"
          quote={
            <QuoteFrame>
              <Quote>
                <QuoteAuthor>Ayah<MoneyWings size={49} /></QuoteAuthor>
                <QuoteText>Iya sekalian bulan ini nanti gajian ayah tambah</QuoteText>
                <QuoteText>lagi</QuoteText>
              </Quote>
            </QuoteFrame>
          }
        />
        <Message side="out" lines={["Ayah bulan ini aku sidang lagi yg", "terakhir"]} time="16.00" />
        <Message side="out" tail lines={["Tapi gatau tanggal brp"]} time="16.00" />
        <Message side="in" first lines={["Oiya kk sukses ya kk...nanti ayah", "gajian ayah tambahkan lg kebetulan", "ada tabungan ayah tadi"]} time="17.38" />
      </Chat>
    </Page>
  );
}
